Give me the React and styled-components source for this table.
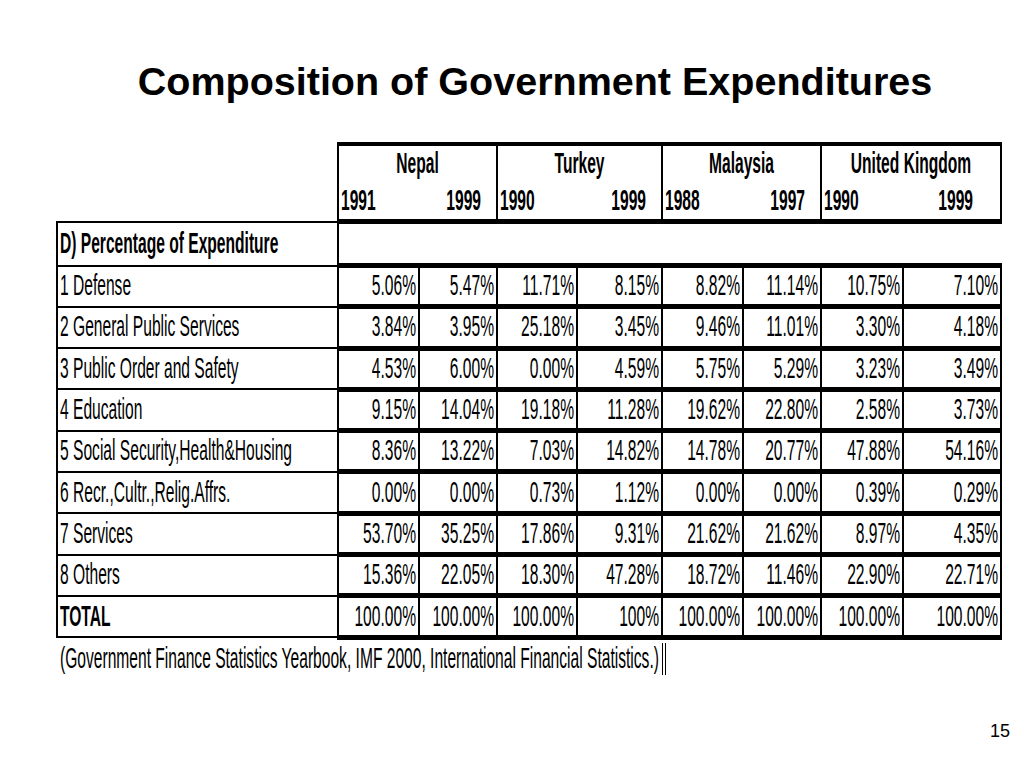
import React from "react"
import styled, { createGlobalStyle } from "styled-components"

const GlobalStyle = createGlobalStyle`
  html, body {
    margin: 0;
    padding: 0;
    background: #fff;
  }
  body {
    font-family: "Liberation Sans", Arial, sans-serif;
    color: #000;
  }
`

const groups = [
  { name: "Nepal", years: ["1991", "1999"] },
  { name: "Turkey", years: ["1990", "1999"] },
  { name: "Malaysia", years: ["1988", "1997"] },
  { name: "United Kingdom", years: ["1990", "1999"] },
]

const rows = [
  ["1 Defense", "5.06%", "5.47%", "11.71%", "8.15%", "8.82%", "11.14%", "10.75%", "7.10%"],
  ["2 General Public Services", "3.84%", "3.95%", "25.18%", "3.45%", "9.46%", "11.01%", "3.30%", "4.18%"],
  ["3 Public Order and Safety", "4.53%", "6.00%", "0.00%", "4.59%", "5.75%", "5.29%", "3.23%", "3.49%"],
  ["4 Education", "9.15%", "14.04%", "19.18%", "11.28%", "19.62%", "22.80%", "2.58%", "3.73%"],
  ["5 Social Security,Health&Housing", "8.36%", "13.22%", "7.03%", "14.82%", "14.78%", "20.77%", "47.88%", "54.16%"],
  ["6 Recr.,Cultr.,Relig.Affrs.", "0.00%", "0.00%", "0.73%", "1.12%", "0.00%", "0.00%", "0.39%", "0.29%"],
  ["7 Services", "53.70%", "35.25%", "17.86%", "9.31%", "21.62%", "21.62%", "8.97%", "4.35%"],
  ["8 Others", "15.36%", "22.05%", "18.30%", "47.28%", "18.72%", "11.46%", "22.90%", "22.71%"],
]

const totals = ["100.00%", "100.00%", "100.00%", "100%", "100.00%", "100.00%", "100.00%", "100.00%"]

const colWidths = [281, 81, 78, 80, 85, 81, 78, 82, 98]

const Page = styled.div`
  width: 1024px;
  height: 768px;
  box-sizing: border-box;
  padding-top: 58px;
  display: flex;
  flex-direction: column;
  overflow: hidden;
`

const Title = styled.h1`
  margin: 0 0 0 46px;
  font-size: 39.5px;
  line-height: 46px;
  font-weight: bold;
  text-align: center;
`

const TableWrap = styled.div`
  margin: 38px 0 0 56px;
  font-family: "Liberation Sans", Arial, sans-serif;
  font-size: 15.6px;
`

const Table = styled.table`
  border-collapse: collapse;
  table-layout: fixed;
  width: 945px;
`

// slide text is a narrow face pulled tall: Arial at narrow width, stretched upward
const Txt = styled.span`
  display: inline-block;
  line-height: 1;
  transform: scaleY(1.85);
  white-space: nowrap;
`

const Blank = styled.th`
  padding: 0;
  border: none;
`

const GroupCell = styled.th`
  height: 36px;
  padding: 0;
  text-align: center;
  font-weight: bold;
  border-top: 4px solid #000;
  border-left: 2px solid #000;
  border-right: 2px solid #000;
`

const YearCell = styled.th`
  height: 37px;
  padding: 0 ${({ $pr }) => $pr || 2}px 0 2px;
  text-align: ${({ $right }) => ($right ? "right" : "left")};
  font-weight: bold;
  border-bottom: 5px solid #000;
  border-left: ${({ $right }) => ($right ? "none" : "2px solid #000")};
  border-right: ${({ $right }) => ($right ? "2px solid #000" : "none")};
`

const LabelCell = styled.td`
  height: ${({ $tall }) => ($tall ? 42 : 39.3)}px;
  padding: 0 2px;
  text-align: left;
  font-weight: ${({ $bold }) => ($bold ? "bold" : "normal")};
  border: 2px solid #000;
`

const NumCell = styled.td`
  padding: 0 2px 0 0;
  text-align: right;
  border-top: 5px solid #000;
  border-bottom: 5px solid #000;
  border-left: 2px solid #000;
  border-right: 2px solid #000;
`

const EmptySpan = styled.td`
  padding: 0;
  border-top: 5px solid #000;
  border-bottom: 5px solid #000;
  border-left: 2px solid #000;
  border-right: none;
`

const Note = styled.div`
  margin: 3px 0 0 4px;
  display: flex;
`

const NoteText = styled.div`
  height: 32px;
  display: flex;
  align-items: center;
  padding-right: 3px;
  border-right: 4px double #000;
`

const Footer = styled.div`
  margin-top: auto;
  padding: 0 14px 26px 0;
  display: flex;
  justify-content: flex-end;
  font-size: 18px;
`

export default function App() {
  return (
    <Page>
      <GlobalStyle />
      <Title>Composition of Government Expenditures</Title>
      <TableWrap>
        <Table>
          <colgroup>
            {colWidths.map((w, i) => (
              <col key={i} style={{ width: w }} />
            ))}
          </colgroup>
          <thead>
            <tr>
              <Blank />
              {groups.map((g) => (
                <GroupCell key={g.name} colSpan={2}>
                  <Txt>{g.name}</Txt>
                </GroupCell>
              ))}
            </tr>
            <tr>
              <Blank />
              {groups.map((g, i) => (
                <React.Fragment key={g.name}>
                  <YearCell>
                    <Txt>{g.years[0]}</Txt>
                  </YearCell>
                  <YearCell $right $pr={i === 3 ? 27 : 15}>
                    <Txt>{g.years[1]}</Txt>
                  </YearCell>
                </React.Fragment>
              ))}
            </tr>
          </thead>
          <tbody>
            <tr>
              <LabelCell $bold $tall>
                <Txt>D) Percentage of Expenditure</Txt>
              </LabelCell>
              <EmptySpan colSpan={8} />
            </tr>
            {rows.map(([label, ...vals]) => (
              <tr key={label}>
                <LabelCell>
                  <Txt>{label}</Txt>
                </LabelCell>
                {vals.map((v, i) => (
                  <NumCell key={i}>
                    <Txt>{v}</Txt>
                  </NumCell>
                ))}
              </tr>
            ))}
            <tr>
              <LabelCell $bold>
                <Txt>TOTAL</Txt>
              </LabelCell>
              {totals.map((v, i) => (
                <NumCell key={i}>
                  <Txt>{v}</Txt>
                </NumCell>
              ))}
            </tr>
          </tbody>
        </Table>
        <Note>
          <NoteText>
            <Txt>(Government Finance Statistics Yearbook, IMF 2000, International Financial Statistics.)</Txt>
          </NoteText>
        </Note>
      </TableWrap>
      <Footer>15</Footer>
    </Page>
  )
}
